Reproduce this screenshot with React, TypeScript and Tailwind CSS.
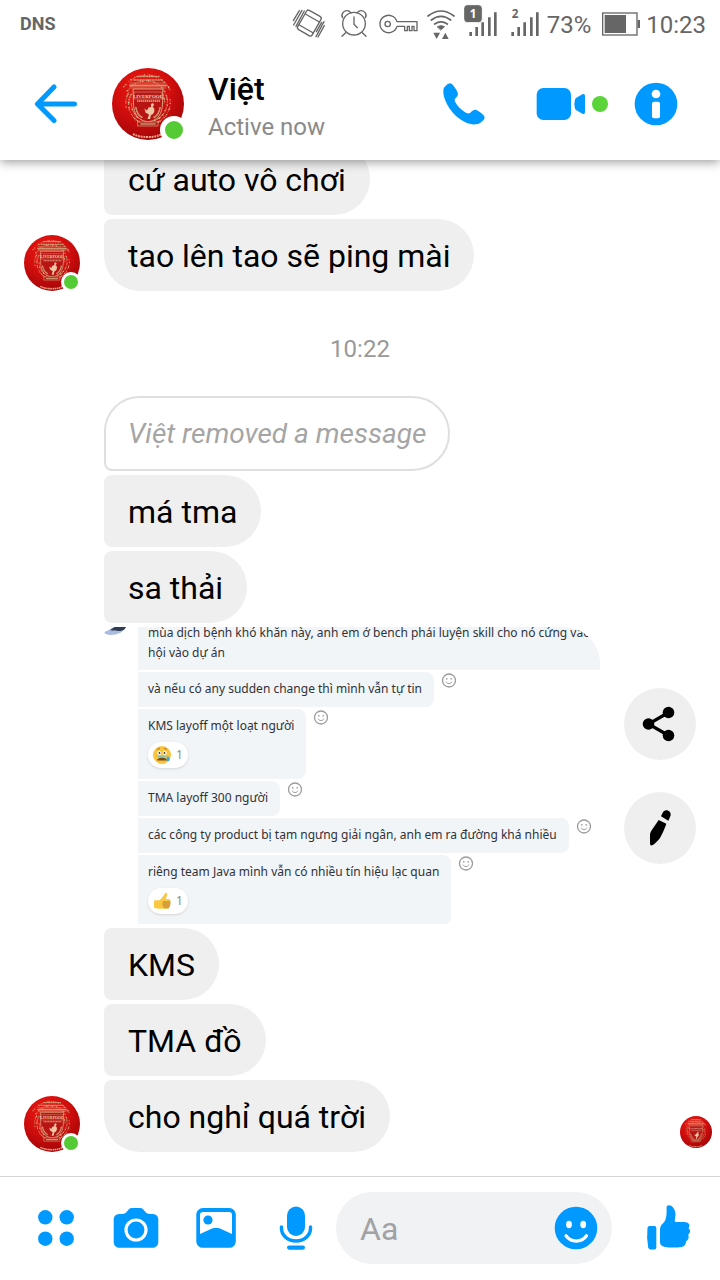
import React from "react";

const BLUE = "#0099ff";

// Filigree round the shield: dense top crown, two side wreaths and a lower garland.
const filigree = Array.from({ length: 230 }, (_, i) => {
  const a = (i * 137.508) % 360;
  const rad = (a * Math.PI) / 180;
  const spread = ((i * 53) % 17) / 17;
  const top = Math.sin(rad) < -0.5;
  const r = top ? 20 + spread * 11 : 17 + spread * 6;
  return {
    x: 36 + Math.cos(rad) * r * 0.98,
    y: 35 + Math.sin(rad) * r,
    s: 0.35 + ((i * 29) % 11) / 18,
    c: i % 3 === 0 ? "#e9bd98" : i % 3 === 1 ? "#cf8f6b" : "#b9714f",
  };
});

function Crest() {
  return (
    <svg viewBox="0 0 72 72" className="block size-full rounded-full" aria-hidden="true">
      <defs>
        <radialGradient id="crest-red" cx="0.42" cy="0.3" r="0.75">
          <stop offset="0" stopColor="#f01a12" />
          <stop offset="0.55" stopColor="#cf0d0d" />
          <stop offset="1" stopColor="#9c0508" />
        </radialGradient>
      </defs>
      <rect width="72" height="72" fill="url(#crest-red)" />
      {filigree.map((d, i) => (
        <circle key={i} cx={d.x} cy={d.y} r={d.s} fill={d.c} />
      ))}
      <path d="M21 21h30c-1 11 1 20-4 27-3 4-7 5-11 6-4-1-8-2-11-6-5-7-3-16-4-27z" fill="#b81413" stroke="#d9a27c" strokeWidth="1" />
      <g fill="none" stroke="#cf9370" strokeLinecap="round">
        <path d="M18 17.500h36" strokeDasharray="2 1.2" strokeWidth="2.200" />
        <path d="M18 20h36M18 15h36" strokeWidth="0.7" />
        <path d="M22 12h28M25 8.500h22" strokeDasharray="1.500 1.500" strokeWidth="1.600" />
        <path d="M24 40c1 5 3 8 7 10M48 40c-1 5-3 8-7 10" strokeDasharray="1 1.600" strokeWidth="1.800" />
        <path d="M26 54h20v4H26z" strokeWidth="0.8" fill="#a91a14" />
        <path d="M29 56h14" strokeDasharray="1.500 1" strokeWidth="1.600" />
      </g>
      <path d="M22 24h28v7H22z" fill="#b71816" stroke="#dfa988" strokeWidth="0.5" />
      <text x="36" y="29.500" textAnchor="middle" fontFamily="Liberation Serif, serif" fontWeight="700" fontSize="5" fill="#f1ccb0">LIVERPOOL</text>
      <path d="M25 33h23" stroke="#dfa988" strokeWidth="1.300" strokeDasharray="1.500 .5" />
      <path d="M39 36l2-1 1 2-1.500 2c3 1 2.500 7-1.500 8l-1 4h-2.500l1.500-4.500-3.500-2-1-4 2.500 2 1.500-3 2.500-.5z" fill="#f0c7a6" />
      <path d="M21 66c4 2 8 3 15 3s10-1 14-3" fill="none" stroke="#f2a48a" strokeWidth="2" strokeDasharray="2 .7" />
    </svg>
  );
}

function SenderAvatar() {
  return (
    <div className="relative size-14 shrink-0">
      <Crest />
      <span className="absolute -right-px -bottom-px size-5 rounded-full border-[3px] border-white bg-[#54ca34]" />
    </div>
  );
}

type Position = "middle" | "last";

function Bubble({ children, position = "middle" }: { children: React.ReactNode; position?: Position }) {
  const shape = position === "last" ? "rounded-bl-[36px]" : "rounded-bl-lg";
  return (
    <p className={`w-fit rounded-l-lg rounded-r-[36px] bg-[#efefef] px-6 pt-[17px] pb-[15px] text-[32px] leading-10 text-black ${shape}`}>
      {children}
    </p>
  );
}

function MessageRow({ children, avatar = false }: { children: React.ReactNode; avatar?: boolean }) {
  return (
    <div className="flex shrink-0 items-end gap-6">
      {avatar ? <SenderAvatar /> : <div className="w-14 shrink-0" />}
      {children}
    </div>
  );
}

function ReactFace() {
  return (
    <svg viewBox="0 0 16 16" className="size-4 shrink-0" fill="none" stroke="#999b9e" strokeLinecap="round" aria-hidden="true">
      <circle cx="8" cy="8.500" r="6.500" strokeWidth="1.300" />
      <path d="M5.200 10c1 2.200 4.600 2.200 5.600 0" />
      <path d="M5.800 6.700v.2M10.200 6.700v.2" strokeWidth="1.600" />
    </svg>
  );
}

function Sad() {
  return (
    <svg viewBox="0 0 20 20" className="size-5" aria-hidden="true">
      <circle cx="10" cy="10" r="9" fill="#fac33c" />
      <path d="M5 4.500l3-1.500M12 3l3 1.500" stroke="#a87622" fill="none" />
      <circle cx="7.300" cy="8" r="2" fill="#fff" />
      <circle cx="12.700" cy="8" r="2" fill="#fff" />
      <circle cx="7.500" cy="8" r=".9" fill="#333" />
      <circle cx="12.500" cy="8" r=".9" fill="#333" />
      <path d="M5.500 15c1.500-2.600 7.500-2.600 9 0z" fill="#7a4a1c" stroke="#7a4a1c" />
      <path d="M5.500 11.500h9" stroke="#8cc3a8" strokeWidth="1.400" />
      <path d="M16 11c2 2.500 2.500 5 0 5s-2-2.500 0-5z" fill="#37a8dd" />
    </svg>
  );
}

function YellowThumb() {
  return (
    <svg viewBox="0 0 20 20" className="size-5" aria-hidden="true">
      <path d="M2 10.500c0-.8.600-1.300 1.400-1.300h3.800c2.600-1.400 3.800-4 5.800-6.700.8-1.300 2.400-.5 2.200 1-.2 1.600-1 3-1.300 4.500h3c1 0 1.700.8 1.500 1.800l-1.300 6.400c-.2 1-1 1.500-2 1.500H6.500L2 16.800z" fill="#fbc840" />
      <path d="M11 10h6.500c1 0 1.400 1 .8 1.700.6.700.5 1.500-.2 2 .4.800.1 1.500-.6 1.800.1 1-.5 1.700-1.400 1.700h-3.600c-2-1-2.800-4-1.500-7.200z" fill="#d69f39" />
    </svg>
  );
}

function ReactionPill({ icon }: { icon: React.ReactNode }) {
  return (
    <span className="flex h-[26px] w-10 items-center gap-1 rounded-full bg-white pl-1 text-xs text-[#8b8d90] shadow-sm">
      {icon}
      <span>1</span>
    </span>
  );
}

const sharedRows: { text: string; reaction?: React.ReactNode }[] = [
  { text: "và nếu có any sudden change thì mình vẫn tự tin" },
  { text: "KMS layoff một loạt người", reaction: <Sad /> },
  { text: "TMA layoff 300 người" },
  { text: "các công ty product bị tạm ngưng giải ngân, anh em ra đường khá nhiều" },
  { text: "riêng team Java mình vẫn có nhiều tín hiệu lạc quan", reaction: <YellowThumb /> },
];

function SharedPhoto() {
  return (
    <figure className="flex h-[297px] w-[496px] shrink-0 overflow-hidden rounded-l-lg rounded-r-[36px] font-['Noto_Sans',sans-serif] text-xs leading-5 text-[#303236]">
      <svg viewBox="0 0 34 12" className="h-3 w-[34px] shrink-0" aria-hidden="true">
        <path d="M0 5C6 3 8 1 9 0h13c-2 5-9 8-15 8-4 0-6-1-7-3z" fill="#a9bce0" />
        <path d="M6 3l5-3h11c-2 4-5 4-8 4-3-1-5 0-8-1z" fill="#303a50" />
      </svg>
      <div className="flex min-w-0 flex-1 flex-col gap-[2px]">
        <div className="flex h-[43px] shrink-0 flex-col justify-end bg-[#f1f5f8] px-[10px] pb-[7px] whitespace-nowrap">
          <p>mùa dịch bệnh khó khăn này, anh em ở bench phải luyện skill cho nó cứng vào</p>
          <p>hội vào dự án</p>
        </div>
        {sharedRows.map((row) => (
          <div key={row.text} className="flex shrink-0 items-start gap-[7px]">
            <div className="rounded-r-lg bg-[#f1f5f8] pt-[7px] pr-3 pb-2 pl-[10px] whitespace-nowrap">
              <p>{row.text}</p>
              {row.reaction && (
                <div className="pt-[6px] pb-[3px]">
                  <ReactionPill icon={row.reaction} />
                </div>
              )}
            </div>
            <ReactFace />
          </div>
        ))}
      </div>
    </figure>
  );
}

function StatusBar() {
  return (
    <div className="flex h-12 shrink-0 items-center justify-between pr-[14px] pl-5 text-[#666]">
      <span className="font-['Liberation_Sans_Narrow','Roboto',sans-serif] text-lg font-bold">DNS</span>
      <div className="flex items-center gap-2 text-2xl">
        <svg viewBox="24 0 126 144" className="h-12 w-[42px]" fill="none" stroke="#666" strokeWidth="4" strokeLinecap="round" strokeLinejoin="round" aria-hidden="true">
          <path d="M80 33q3-5 8-2l32 18q6 4 3 9l-26 46q-4 7-10 3L56 89q-6-4-3-9z" />
          <path d="M76 42l42 24M58 75l42 24" />
          <path d="M58 32L40 62M66 31L41 75M73 33L48 79M132 65l-24 45M133 77l-19 34M125 67l-16 28" />
        </svg>
        <svg viewBox="174 0 96 144" className="h-12 w-8" fill="none" stroke="#666" strokeWidth="4" strokeLinecap="round" aria-hidden="true">
          <circle cx="222" cy="71" r="34" />
          <path d="M222 51v22l10 10M197 98l-11 11M247 98l11 11" />
          <path d="M188 53c-7-9 3-23 14-21 7 1 9 4 11 7M256 53c7-9-3-23-14-21-7 1-9 4-11 7" />
        </svg>
        <svg viewBox="294 0 120 144" className="h-12 w-10" fill="none" stroke="#666" strokeWidth="4" aria-hidden="true">
          <path d="M351 65h60v27h-9V79h-6v13h-8V79h-6v13h-8V79h-23a26 26 0 1 1 0-14z" strokeLinejoin="round" />
          <circle cx="323" cy="72" r="8" />
        </svg>
        <svg viewBox="438 0 90 144" className="h-12 w-[30px]" fill="none" stroke="#666" strokeWidth="5" strokeLinecap="round" aria-hidden="true">
          <path d="M444 48q39-30 78 0M454 60q29-22 58 0M464 72q19-13 38 0" />
          <path d="M472 80q11-7 22 0l-11 10z" fill="#666" strokeWidth="2" />
          <path d="M460 98h20l-10 19zM486 117h20l-10-19z" fill="#666" stroke="none" />
        </svg>
        <svg viewBox="552 0 114 144" className="h-12 w-[38px]" aria-hidden="true">
          <path d="M572 96v12M590 81v27M608 67v41M628 52v56M646 37v71" stroke="#666" strokeWidth="8" />
          <rect x="551" y="14" width="56" height="54" rx="11" fill="#666" stroke="#fff" strokeWidth="3" />
          <text x="579" y="53" textAnchor="middle" fontFamily="Noto Sans, sans-serif" fontWeight="700" fontSize="35" fill="#fff">1</text>
        </svg>
        <svg viewBox="690 0 87 144" className="h-12 w-[29px]" aria-hidden="true">
          <path d="M698 96v12M716 81v27M734 67v41M754 52v56M772 37v71" stroke="#666" strokeWidth="8" />
          <text x="705" y="54" textAnchor="middle" fontFamily="Noto Sans, sans-serif" fontWeight="700" fontSize="35" fill="#666">2</text>
        </svg>
        <span className="pt-[2px]">73%</span>
        <svg viewBox="960 0 117 144" className="h-12 w-[39px] overflow-visible" aria-hidden="true">
          <rect x="971" y="39" width="103" height="66" fill="none" stroke="#666" strokeWidth="4" />
          <path d="M977 45h64v54h-64zM1076 60h7v24h-7z" fill="#666" />
        </svg>
        <span className="pt-[2px]">10:23</span>
      </div>
    </div>
  );
}

function Header() {
  return (
    <header className="relative z-10 shrink-0 bg-white shadow-[0_2px_10px_rgba(0,0,0,0.4)]">
      <StatusBar />
      <div className="flex h-28 items-center pr-5">
        <button type="button" aria-label="Back" className="flex w-28 justify-center">
          <svg viewBox="0 0 44 44" className="size-11" fill="none" stroke={BLUE} strokeWidth="5" strokeLinecap="round" strokeLinejoin="round">
            <path d="M20 5L3.500 22 20 38.500M4 22h36.500" />
          </svg>
        </button>
        <div className="relative size-[72px] shrink-0">
          <Crest />
          <span className="absolute -right-1 -bottom-1 size-7 rounded-full border-[5px] border-white bg-[#54ca34]" />
        </div>
        <div className="min-w-0 flex-1 pt-[5px] pl-6">
          <h1 className="text-[32px] leading-10 font-medium text-black">Việt</h1>
          <p className="text-2xl leading-9 text-[#8a8a8a]">Active now</p>
        </div>
        <div className="flex items-center">
          <button type="button" aria-label="Call" className="mr-5 flex w-24 justify-center">
            <svg viewBox="66 66 132 132" className="size-11" fill={BLUE}>
              <path d="M91 70c-4-1-19 8-21 20-2 19 11 50 32 72 22 22 46 33 66 31 14-2 25-14 26-20 1-7-18-20-25-23-5-2-12 2-18 8-4 4-10 2-18-3-12-7-22-18-27-28-3-7-3-9 2-14 5-5 7-10 5-15-3-8-14-26-22-28z" />
            </svg>
          </button>
          <button type="button" aria-label="Video call" className="flex w-20 justify-center">
            <svg viewBox="348 66 219 132" className="h-11 w-[73px]">
              <rect x="350" y="84" width="103" height="96" rx="20" fill={BLUE} />
              <path d="M465 118q2-4 8-7l14-8q8-3 8 5v48q0 8-8 5l-14-8q-6-3-8-7-4-14 0-28z" fill={BLUE} />
              <circle cx="540" cy="132" r="24" fill="#5bd43a" />
            </svg>
          </button>
          <button type="button" aria-label="Conversation details" className="flex w-[88px] justify-center">
            <svg viewBox="642 66 132 132" className="size-11">
              <circle cx="708" cy="132" r="64" fill={BLUE} />
              <circle cx="708" cy="102" r="13" fill="#fff" />
              <rect x="696" y="125" width="24" height="50" rx="6" fill="#fff" />
            </svg>
          </button>
        </div>
      </div>
    </header>
  );
}

function Conversation() {
  return (
    <main className="flex min-h-0 flex-1 flex-col justify-end gap-1 overflow-hidden px-6 pb-6">
      <MessageRow><Bubble>cứ auto vô chơi</Bubble></MessageRow>
      <MessageRow avatar><Bubble position="last">tao lên tao sẽ ping mài</Bubble></MessageRow>
      <time className="mt-10 mb-[29px] shrink-0 self-center text-2xl leading-7 text-[#999]">10:22</time>
      <MessageRow>
        <p className="w-fit rounded-tl-[36px] rounded-r-[38px] rounded-bl-lg border-2 border-[#dfdfdf] px-[22px] pt-4 pb-[15px] text-[28px] leading-10 text-[#a5a5a5] italic">
          Việt removed a message
        </p>
      </MessageRow>
      <MessageRow><Bubble>má tma</Bubble></MessageRow>
      <MessageRow><Bubble>sa thải</Bubble></MessageRow>
      <div className="flex shrink-0 items-center justify-between pl-20">
        <SharedPhoto />
        <div className="flex flex-col gap-8">
          <button type="button" aria-label="Share photo" className="flex size-[72px] items-center justify-center rounded-full bg-[#efefef]">
            <svg viewBox="0 0 36 36" className="size-9" aria-hidden="true">
              <path d="M26.500 6.500L6.500 18l20 11.500" fill="none" stroke="#000" strokeWidth="3.200" />
              <circle cx="26.500" cy="6.500" r="5.800" />
              <circle cx="6.500" cy="18" r="5.800" />
              <circle cx="26.500" cy="29.500" r="5.800" />
            </svg>
          </button>
          <button type="button" aria-label="Edit photo" className="flex size-[72px] items-center justify-center rounded-full bg-[#efefef]">
            <svg viewBox="786 585 108 108" className="size-9" aria-hidden="true">
              <path d="M843 604c4-8 7-17 15-18 8 0 15 6 14 14-1 5-4 12-7 17zM836 615l23 11c-3 11-14 34-19 43-5 7-13 15-20 20-7 4-10 3-10-5v-25c0-4 2-8 4-12z" />
            </svg>
          </button>
        </div>
      </div>
      <MessageRow><Bubble>KMS</Bubble></MessageRow>
      <MessageRow><Bubble>TMA đồ</Bubble></MessageRow>
      <div className="relative shrink-0">
        <MessageRow avatar><Bubble position="last">cho nghỉ quá trời</Bubble></MessageRow>
        <div className="absolute -right-4 bottom-1 size-8"><Crest /></div>
      </div>
    </main>
  );
}

function ToolButton({ label, children }: { label: string; children: React.ReactNode }) {
  return (
    <button type="button" aria-label={label} className="flex w-20 shrink-0 justify-center">
      <svg viewBox="0 0 48 48" className="size-12" fill={BLUE}>{children}</svg>
    </button>
  );
}

function Composer() {
  return (
    <footer className="flex shrink-0 items-center border-t border-[#d6d6d6] bg-white pt-[15px] pr-3 pb-4 pl-4">
      <ToolButton label="More">
        <circle cx="13.300" cy="13.300" r="7.200" />
        <circle cx="34.700" cy="13.300" r="7.200" />
        <circle cx="13.300" cy="34.700" r="7.200" />
        <circle cx="34.700" cy="34.700" r="7.200" />
      </ToolButton>
      <ToolButton label="Camera">
        <path d="M8 10h2c2.500 0 3.800-1 5.200-2.700C16.800 5.200 17.500 4 20 4h8c2.500 0 3.200 1.200 4.800 3.300C34.200 9 35.500 10 38 10h2c4 0 6.300 2 6.300 6v21.500c0 4-2.300 6.300-6.300 6.300H8c-4 0-6.300-2.300-6.300-6.300V16c0-4 2.300-6 6.300-6z" />
        <circle cx="24" cy="26" r="10" stroke="#fff" strokeWidth="3.200" />
      </ToolButton>
      <ToolButton label="Gallery">
        <rect x="4.300" y="4" width="39.500" height="39.800" rx="6.500" />
        <path d="M8 11q0-3 3-3h26q3 0 3 3v19l-12-5.500q-4-1.500-8 0L8 30z" fill="#fff" />
        <circle cx="16" cy="16" r="4.600" />
      </ToolButton>
      <ToolButton label="Voice message">
        <rect x="15" y="2.500" width="18" height="29.500" rx="9" />
        <path d="M9.500 23v1.500a14.500 12.500 0 0 0 29 0V23" fill="none" stroke={BLUE} strokeWidth="3.500" strokeLinecap="round" />
        <rect x="15" y="41.500" width="18" height="4.200" rx="2.100" />
      </ToolButton>
      <div className="flex h-[72px] min-w-0 flex-1 items-center rounded-full bg-[#f1f2f4] pr-3 pl-6">
        <input type="text" aria-label="Message" placeholder="Aa" className="min-w-0 flex-1 bg-transparent pt-[2px] text-[32px] leading-10 outline-none placeholder:text-[#a1a2a4]" />
        <button type="button" aria-label="Emoji" className="shrink-0">
          <svg viewBox="0 0 48 48" className="size-12">
            <circle cx="24" cy="24" r="21.300" fill={BLUE} />
            <ellipse cx="17" cy="20.500" rx="2.900" ry="3.700" fill="#fff" />
            <ellipse cx="31.200" cy="20.500" rx="2.900" ry="3.700" fill="#fff" />
            <path d="M14 31.800c5 7 15.500 7 20.500 0" fill="none" stroke="#fff" strokeWidth="3.200" strokeLinecap="round" />
          </svg>
        </button>
      </div>
      <div className="ml-4">
        <ToolButton label="Send a like">
          <path d="M5.500 22h4.800q2 0 2 2v19.500q0 2-2 2H6.700q-2 0-2.500-2-1.800-9.500-.7-19.500.3-2 2-2z" />
          <path d="M25 1.200c3.500.2 6.500 4.500 6.500 9 0 2.500-.7 4.500-.7 7 0 .5.300.7.800.7h8c3 0 5.800 1.200 5.800 3.300 0 1.400-.4 2.300-1 3 1.400.8 1.800 2 1.600 3.400-.2 1.600-.9 2.500-2 3.300.7 1 .9 2 .5 3.400-.4 1.500-1.300 2.400-2.500 3 .2 3-1.500 5.200-4.500 5.700-5 .8-12 .9-17.500-.3-2.700-.6-4-2-4-4.600V25.500c0-2.700 1-4.500 3.300-6.500 2.500-2.300 3.200-6.500 3.300-10.500V4c0-1.900.5-2.900 2.400-2.800z" />
        </ToolButton>
      </div>
    </footer>
  );
}

export default function App() {
  return (
    <div className="flex h-screen flex-col overflow-hidden bg-white font-['Roboto',sans-serif]">
      <Header />
      <Conversation />
      <Composer />
    </div>
  );
}
